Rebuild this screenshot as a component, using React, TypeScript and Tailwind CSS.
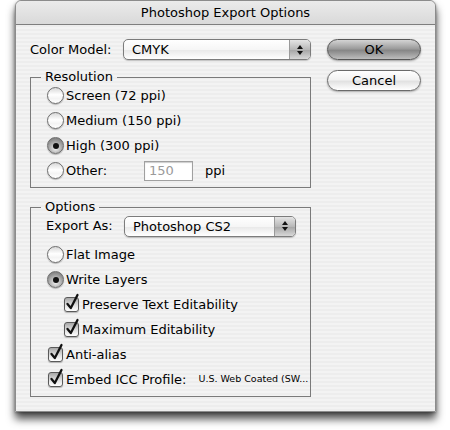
import type { ReactNode } from "react";

const font = { fontFamily: '"DejaVu Sans", "Liberation Sans", sans-serif' };

function Radio({ checked = false }: { checked?: boolean }) {
  return (
    <span
      className={
        "relative inline-flex size-[17px] shrink-0 items-center justify-center rounded-full border border-[#6e6e6e] shadow-[0_1px_1px_rgba(0,0,0,0.25)] " +
        (checked
          ? "bg-[radial-gradient(circle_at_50%_70%,#f0f0f0_0%,#9a9a9a_60%,#6a6a6a_100%)]"
          : "bg-[linear-gradient(180deg,#d8d8d8_0%,#ffffff_45%,#f4f4f4_70%,#ffffff_100%)]")
      }
    >
      {checked && <span className="size-[6px] rounded-full bg-[#111]" />}
    </span>
  );
}

function Check() {
  return (
    <span className="relative inline-block size-[15px] shrink-0 rounded-[3px] border border-[#5a5a5a] bg-[linear-gradient(180deg,#a8a8a8_0%,#e0e0e0_55%,#ffffff_100%)] shadow-[0_1px_1px_rgba(0,0,0,0.25)]">
      <svg viewBox="0 0 16 19" className="absolute -left-[1px] -top-[5px] h-[19px] w-[16px] overflow-visible">
        <path d="M3.5 11 L6.8 15 L13.5 2" fill="none" stroke="#111" strokeWidth="2.3" strokeLinejoin="round" strokeLinecap="round" />
      </svg>
    </span>
  );
}

function Select({ value, width }: { value: string; width: string }) {
  return (
    <div
      className={
        width +
        " flex h-[21px] items-stretch overflow-hidden rounded-[5px] border border-[#7c7c7c] bg-[linear-gradient(180deg,#ffffff_0%,#f6f6f6_50%,#e8e8e8_51%,#ffffff_100%)] shadow-[0_1px_1px_rgba(0,0,0,0.2)]"
      }
    >
      <span className="flex-1 pl-[8px] text-[13px] leading-[19px] text-black">{value}</span>
      <span className="flex w-[21px] flex-col items-center justify-center gap-[2px] border-l border-[#9a9a9a] bg-[linear-gradient(180deg,#e4e4e4_0%,#b8b8b8_50%,#a4a4a4_51%,#d8d8d8_100%)]">
        <svg viewBox="0 0 6 4" className="h-[4px] w-[6px]">
          <path d="M0 4 L3 0 L6 4 Z" fill="#111" />
        </svg>
        <svg viewBox="0 0 6 4" className="h-[4px] w-[6px]">
          <path d="M0 0 L3 4 L6 0 Z" fill="#111" />
        </svg>
      </span>
    </div>
  );
}

function Row({ children, indent = "" }: { children: ReactNode; indent?: string }) {
  return <div className={"flex h-[25px] items-center gap-[2px] " + indent}>{children}</div>;
}

function Group({ title, children, className = "" }: { title: string; children: ReactNode; className?: string }) {
  return (
    <fieldset className={"border border-[#7a7a7a] pl-[16px] " + className}>
      <legend className="-ml-[6px] px-[4px] text-[13px] leading-[16px] text-black">{title}</legend>
      {children}
    </fieldset>
  );
}

export default function App() {
  return (
    <div className="h-[430px] w-[450px] overflow-hidden bg-white" style={font}>
      <div className="ml-[15px] mt-0 flex h-[412px] w-[421px] flex-col rounded-t-[6px] border border-[#8c8c8c] bg-[repeating-linear-gradient(180deg,#ededed_0px,#ededed_2px,#f3f3f3_2px,#f3f3f3_4px)] shadow-[0_7px_9px_rgba(0,0,0,0.7),0_1px_3px_rgba(0,0,0,0.35)]">
        <div className="flex h-[24px] shrink-0 items-center justify-center rounded-t-[6px] border-b border-[#7e7e7e] bg-[linear-gradient(180deg,#ebebeb_0%,#d9d9d9_100%)]">
          <span className="text-[13px] leading-none text-black">Photoshop Export Options</span>
        </div>

        <div className="flex pl-[14px] pt-[14px]">
          <div className="w-[281px]">
            <div className="flex h-[21px] items-center">
              <span className="w-[93px] text-[13px] text-black">Color Model:</span>
              <Select value="CMYK" width="w-[188px]" />
            </div>

            <Group title="Resolution" className="mt-[9px] pb-[4px]">
              <div className="-mt-[2px]">
                <Row>
                  <Radio />
                  <span className="text-[13px]">Screen (72 ppi)</span>
                </Row>
                <Row>
                  <Radio />
                  <span className="text-[13px]">Medium (150 ppi)</span>
                </Row>
                <Row>
                  <Radio checked />
                  <span className="text-[13px]">High (300 ppi)</span>
                </Row>
                <Row>
                  <Radio />
                  <span className="w-[76px] text-[13px]">Other:</span>
                  <span className="flex h-[20px] w-[49px] items-center border border-[#a0a0a0] bg-white pl-[4px] text-[13px] text-[#9a9a9a] shadow-[inset_0_1px_1px_rgba(0,0,0,0.2)]">
                    150
                  </span>
                  <span className="ml-[10px] text-[13px]">ppi</span>
                </Row>
              </div>
            </Group>

            <Group title="Options" className="mt-[11px] pb-[4px]">
              <div className="flex h-[22px] items-center -ml-[1px]">
                <span className="w-[78px] text-[13px]">Export As:</span>
                <Select value="Photoshop CS2" width="w-[172px]" />
              </div>
              <div className="mt-[5px]">
                <Row>
                  <Radio />
                  <span className="text-[13px]">Flat Image</span>
                </Row>
                <Row>
                  <Radio checked />
                  <span className="text-[13px]">Write Layers</span>
                </Row>
                <Row indent="pl-[17px]">
                  <Check />
                  <span className="ml-[1px] text-[13px]">Preserve Text Editability</span>
                </Row>
                <Row indent="pl-[17px]">
                  <Check />
                  <span className="ml-[1px] text-[13px]">Maximum Editability</span>
                </Row>
                <Row indent="pl-[1px]">
                  <Check />
                  <span className="ml-[1px] text-[13px]">Anti-alias</span>
                </Row>
                <Row indent="pl-[1px]">
                  <Check />
                  <span className="ml-[1px] text-[13px]">Embed ICC Profile:</span>
                  <span className="ml-[10px] text-[9.5px]">U.S. Web Coated (SW...</span>
                </Row>
              </div>
            </Group>
          </div>

          <div className="ml-[16px] flex w-[94px] flex-col gap-[10px]">
            <div className="flex h-[21px] items-center justify-center rounded-full border border-[#555] bg-[linear-gradient(180deg,#d4d4d4_0%,#9c9c9c_45%,#878787_55%,#bdbdbd_100%)] text-[13px] text-black shadow-[0_1px_2px_rgba(0,0,0,0.35)]">
              OK
            </div>
            <div className="flex h-[21px] items-center justify-center rounded-full border border-[#6a6a6a] bg-[linear-gradient(180deg,#ffffff_0%,#f2f2f2_45%,#e2e2e2_55%,#ffffff_100%)] text-[13px] text-black shadow-[0_1px_2px_rgba(0,0,0,0.3)]">
              Cancel
            </div>
          </div>
        </div>
      </div>
    </div>
  );
}
